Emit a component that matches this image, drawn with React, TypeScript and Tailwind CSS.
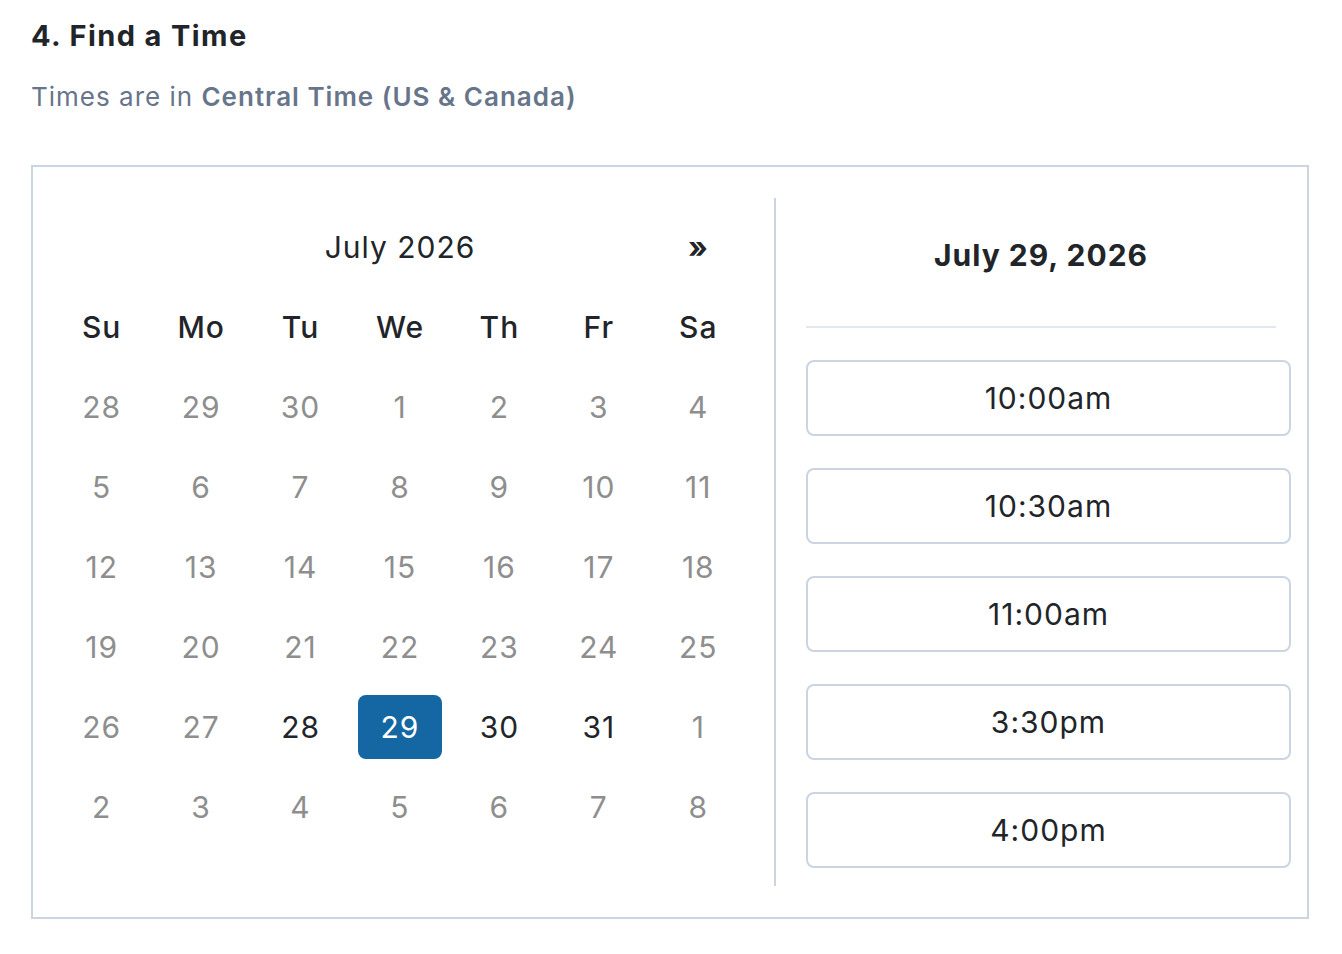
import React from "react";

type Day = { n: number; kind: "muted" | "avail" | "selected" };

const rows: Day[][] = (() => {
  const nums = [
    [28, 29, 30, 1, 2, 3, 4],
    [5, 6, 7, 8, 9, 10, 11],
    [12, 13, 14, 15, 16, 17, 18],
    [19, 20, 21, 22, 23, 24, 25],
    [26, 27, 28, 29, 30, 31, 1],
    [2, 3, 4, 5, 6, 7, 8],
  ];
  return nums.map((r, ri) =>
    r.map((n, ci) => {
      if (ri === 4 && ci === 3) return { n, kind: "selected" as const };
      if (ri === 4 && (ci === 2 || ci === 4 || ci === 5)) return { n, kind: "avail" as const };
      return { n, kind: "muted" as const };
    })
  );
})();

const dayNames = ["Su", "Mo", "Tu", "We", "Th", "Fr", "Sa"];
const times = ["10:00am", "10:30am", "11:00am", "3:30pm", "4:00pm"];

export default function App() {
  return (
    <div
      className="min-h-screen bg-white pl-[31px] pt-[19px] tracking-[1px] text-[#212529]"
      style={{ fontFamily: "Inter, 'Noto Sans', sans-serif" }}
    >
      <h1 className="text-[29px] leading-[34px] font-bold tracking-[1.4px]">4. Find a Time</h1>
      <p className="mt-[28px] text-[26px] leading-[32px] text-[#67758b]">
        Times are in <span className="font-semibold">Central Time (US &amp; Canada)</span>
      </p>

      <div className="mt-[52px] flex h-[754px] w-[1278px] border-2 border-[#cbd5e1]">
        {/* Calendar */}
        <div className="w-[741px] pl-[19px] pt-[40px]">
          <div className="grid w-[696px] grid-cols-7">
            <div className="col-span-5 col-start-2 flex h-[80px] items-center justify-center text-[30px] leading-none">
              July 2026
            </div>
            <div className="flex h-[80px] items-center justify-center text-[30px] font-bold leading-none">
              »
            </div>
            {dayNames.map((d) => (
              <div
                key={d}
                className="flex h-[80px] items-center justify-center text-[30px] font-medium leading-none"
              >
                {d}
              </div>
            ))}
            {rows.flat().map((d, i) => (
              <div key={i} className="flex h-[80px] items-center justify-center">
                {d.kind === "selected" ? (
                  <div className="flex h-[64px] w-[84px] items-center justify-center rounded-[8px] bg-[#1467a2] text-[30px] leading-none text-white">
                    {d.n}
                  </div>
                ) : (
                  <span
                    className={
                      d.kind === "avail"
                        ? "text-[30px] leading-none text-[#212529]"
                        : "text-[30px] leading-none text-[#8e8e8e]"
                    }
                  >
                    {d.n}
                  </span>
                )}
              </div>
            ))}
          </div>
        </div>

        {/* Times */}
        <div className="my-[31px] w-[533px] border-l-2 border-[#cbd5e1] pl-[30px]">
          <div className="flex h-[114px] w-[470px] items-center justify-center text-[30px] font-bold leading-none">
            July 29, 2026
          </div>
          <div className="mt-[14px] w-[470px] border-b-2 border-[#e2e8f0]" />
          <div className="mt-[32px] flex w-[485px] flex-col gap-[32px]">
            {times.map((t) => (
              <button
                key={t}
                className="flex h-[76px] w-full items-center justify-center rounded-[8px] border-2 border-[#cbd5e1] bg-white text-[30px] leading-none text-[#212529]"
              >
                {t}
              </button>
            ))}
          </div>
        </div>
      </div>
    </div>
  );
}
